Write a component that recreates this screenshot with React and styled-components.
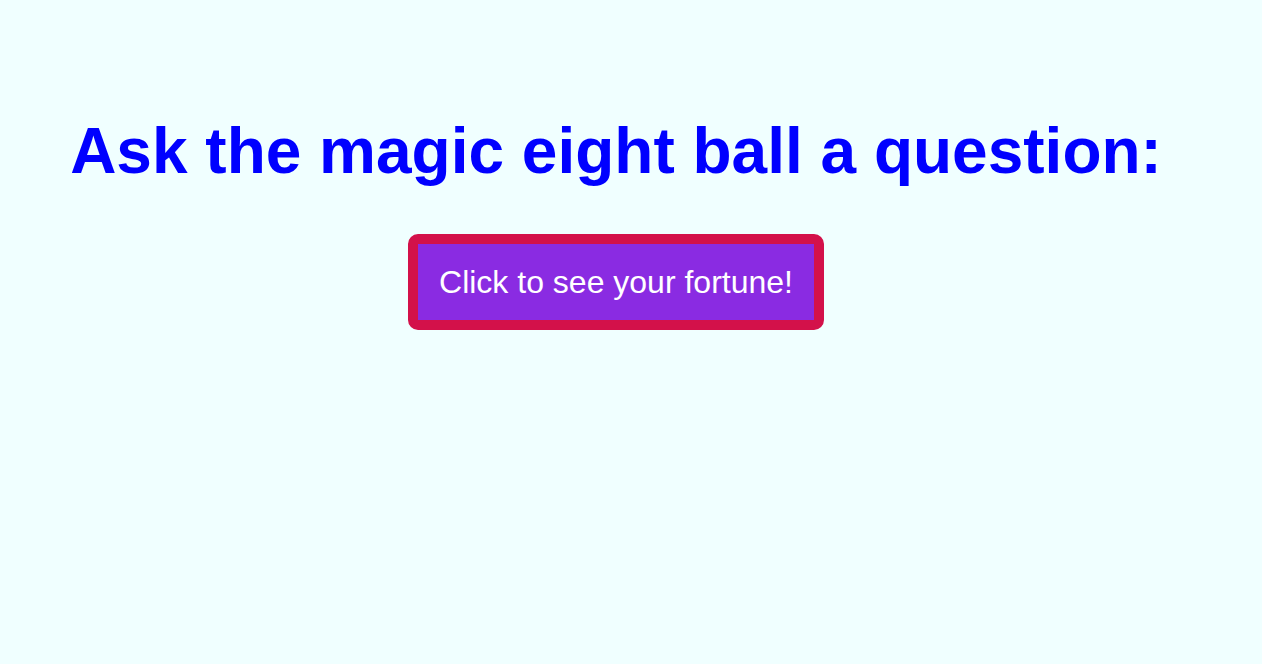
import React from "react";
import styled, { createGlobalStyle } from "styled-components";

const GlobalStyle = createGlobalStyle`
  html, body {
    margin: 0;
    padding: 0;
    background-color: azure;
  }
`

const Page = styled.div`
  display: flex;
  flex-direction: column;
  align-items: center;
  width: 1232px;
  padding-top: 113px;
  font-family: "Liberation Sans", Arial, sans-serif;
`
const Title = styled.h1`
  margin: 0;
  color: blue;
  font-size: 64px;
  font-weight: bold;
  line-height: 76px;
`
const FortuneButton = styled.button`
  margin-top: 45px;
  padding: 20px 21px;
  background-color: blueviolet;
  color: white;
  border: 10px solid #d3114a;
  border-radius: 10px;
  font-family: "Liberation Sans", Arial, sans-serif;
  font-size: 32px;
  line-height: 36px;
  cursor: pointer;
`

export default function App() {
    return (
        <Page>
            <GlobalStyle />
            <Title>Ask the magic eight ball a question:</Title>
            <FortuneButton>Click to see your fortune!</FortuneButton>
        </Page>
    )
}
